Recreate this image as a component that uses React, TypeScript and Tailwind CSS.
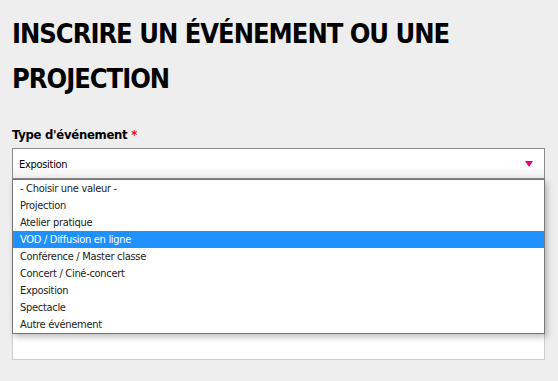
const options = [
  '- Choisir une valeur -',
  'Projection',
  'Atelier pratique',
  'VOD / Diffusion en ligne',
  'Conférence / Master classe',
  'Concert / Ciné-concert',
  'Exposition',
  'Spectacle',
  'Autre événement',
]

const App = () => {
  return (
    <div className="min-h-screen bg-[#eeeeee] pl-3 pr-[13px] pt-[11px] font-['DejaVu_Sans_Condensed',sans-serif] text-black">
      <h1 className="text-[27px] font-bold leading-[45px] tracking-[-1px] uppercase">
        Inscrire un événement ou une projection
      </h1>

      <div className="mt-[25px]">
        <label className="block text-[13px] font-bold leading-[18px] tracking-[-0.3px]">
          Type d'événement <span className="text-[#ff0000]">*</span>
        </label>

        <div className="relative mt-[4px]">
          <div className="flex h-[31px] items-center justify-between border border-[#8a8a8a] bg-gradient-to-b from-white from-60% to-[#eeeeee] px-[6px] pt-[4px] text-[11px] tracking-[-0.3px]">
            <span>Exposition</span>
            <svg width="8" height="6" viewBox="0 0 8 6" className="mr-[5px] -mt-[4px]">
              <path d="M0 0 H8 L4 6 Z" fill="#e6007e" />
            </svg>
          </div>

          <ul className="absolute left-0 right-0 top-[31px] z-10 border border-[#777777] bg-white text-[11px] tracking-[-0.3px] shadow-[2px_3px_6px_rgba(0,0,0,0.25)]">
            {options.map((opt, i) => (
              <li
                key={i}
                className={
                  'h-[17px] px-[7px] leading-[17px] ' +
                  (i === 3 ? 'bg-[#1e90ff] text-white' : 'text-[#222222]')
                }
              >
                {opt}
              </li>
            ))}
          </ul>

          <div className="h-[150px]" />
          <div className="h-[31px] border border-[#cccccc] bg-white" />
        </div>
      </div>
    </div>
  )
}

export default App
